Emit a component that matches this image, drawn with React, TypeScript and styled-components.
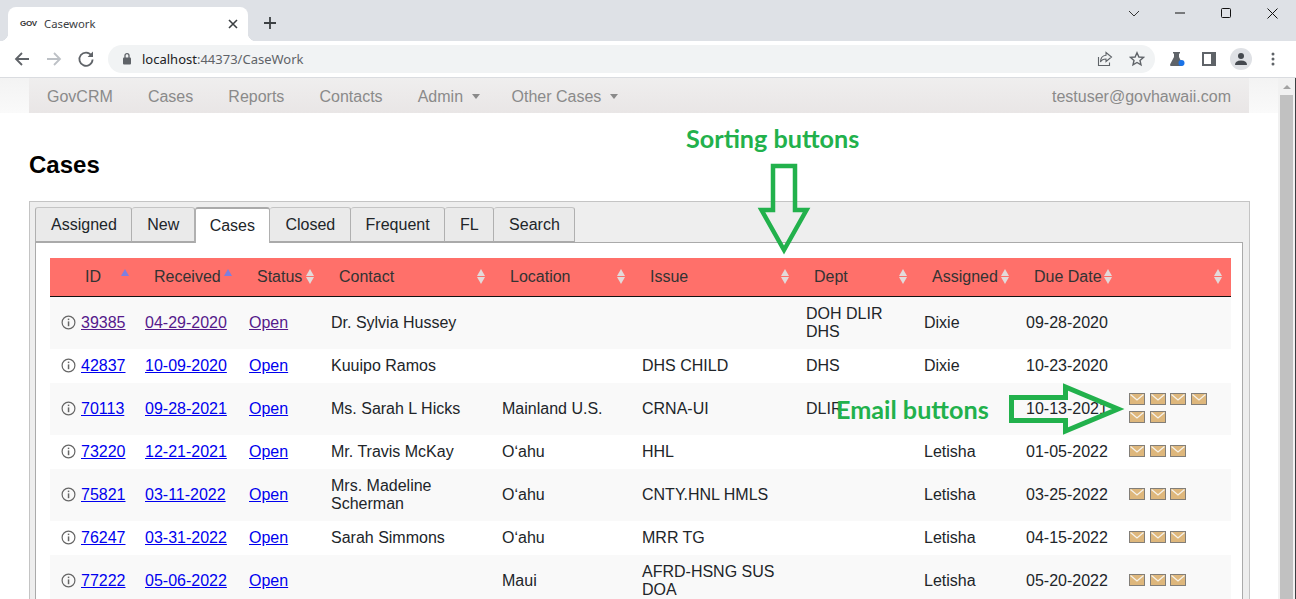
import styled, { createGlobalStyle } from "styled-components";

const GlobalStyle = createGlobalStyle`
  html, body {
    margin: 0;
    padding: 0;
    height: 599px;
    overflow: hidden;
    background: #fff;
    font-family: "Liberation Sans", Arial, sans-serif;
    font-size: 16px;
    color: #212529;
  }
`;

const Screen = styled.div`
  position: relative;
  width: 1296px;
  height: 599px;
  overflow: hidden;
`;

// Browser chrome

const TabStrip = styled.div`
  height: 41px;
  box-sizing: border-box;
  padding: 7px 0 0 8px;
  background: #dee1e6;
  display: flex;
  align-items: flex-start;
`;
const BrowserTab = styled.div`
  position: relative;
  width: 240px;
  height: 34px;
  box-sizing: border-box;
  padding: 0 10px 1px 12px;
  border-radius: 8px 8px 0 0;
  background: #fff;
  display: flex;
  align-items: center;
  font-family: "Noto Sans", sans-serif;
  font-size: 11.3px;
  color: #3c4043;
  &::before,
  &::after {
    content: "";
    position: absolute;
    bottom: 0;
    width: 8px;
    height: 8px;
  }
  &::before {
    left: -8px;
    background: radial-gradient(circle at 0 0, transparent 8px, #fff 8.5px);
  }
  &::after {
    right: -8px;
    background: radial-gradient(circle at 100% 0, transparent 8px, #fff 8.5px);
  }
`;
const Favicon = styled.span`
  width: 24px;
  font-family: "Liberation Sans", sans-serif;
  font-size: 8px;
  letter-spacing: -0.3px;
  font-weight: 700;
  color: #333;
`;
const TabTitle = styled.span`
  flex: 1;
`;
const NewTab = styled.div`
  width: 16px;
  height: 16px;
  margin: 9px 0 0 15px;
`;
const WindowButtons = styled.div`
  margin-left: auto;
  margin-top: -1px;
  display: flex;
  align-items: center;
  height: 14px;
  padding-right: 18px;
  gap: 36px;
`;
const Toolbar = styled.div`
  height: 37px;
  box-sizing: border-box;
  padding: 0 0 1px 13px;
  background: #fff;
  border-bottom: 1px solid #dadce0;
  display: flex;
  align-items: center;
`;
const ToolIcon = styled.div<{ $gap?: number }>`
  width: 18px;
  height: 18px;
  margin-right: ${({ $gap }) => ($gap !== undefined ? $gap : 14)}px;
  display: flex;
`;
const Omnibox = styled.div`
  width: 1047px;
  height: 28px;
  box-sizing: border-box;
  margin: 0 13px 0 -1px;
  padding: 0 10px 0 13px;
  border-radius: 14px;
  background: #f1f3f4;
  display: flex;
  align-items: center;
  font-family: "Noto Sans", sans-serif;
  font-size: 13px;
  color: #5f6368;
`;
const Url = styled.span`
  margin-left: 9px;
  flex: 1;
  b {
    font-weight: 400;
    color: #202124;
  }
`;
const Avatar = styled.div`
  width: 22px;
  height: 22px;
  border-radius: 50%;
  background: #dfe1e5;
  margin-right: 19px;
  display: flex;
  align-items: center;
  justify-content: center;
`;

// Page

const Viewport = styled.div`
  display: flex;
  height: 521px;
`;
const Page = styled.div`
  width: 1278px;
  flex-shrink: 0;
`;
const Scrollbar = styled.div`
  width: 18px;
  box-sizing: border-box;
  padding: 7px 2px 0 2px;
  background: #f1f1f1;
  border-right: 1px solid #3c4043;
  display: flex;
  flex-direction: column;
  align-items: center;
`;
const ScrollArrow = styled.div`
  width: 0;
  height: 0;
  border-left: 4px solid transparent;
  border-right: 4px solid transparent;
  border-bottom: 4px solid #a3a3a3;
`;
const ScrollThumb = styled.div`
  width: 100%;
  flex: 1;
  margin-top: 6px;
  background: #c1c1c1;
`;
const NavWrap = styled.div`
  padding: 0 29px;
  background: linear-gradient(#f3f3f3, #fafafa);
`;
const NavBar = styled.nav`
  height: 35px;
  padding: 2px 18px 0 18px;
  box-sizing: border-box;
  background: linear-gradient(#efeeee, #e9e6e6);
  display: flex;
  align-items: center;
  color: #8a8a8a;
`;
const NavItem = styled.span<{ $menu?: boolean }>`
  margin-right: ${({ $menu }) => ($menu ? 31.5 : 35.1)}px;
  display: flex;
  align-items: center;
`;
const Caret = styled.span`
  margin-left: 9px;
  width: 0;
  height: 0;
  border-left: 4px solid transparent;
  border-right: 4px solid transparent;
  border-top: 5px solid #8a8a8a;
`;
const NavUser = styled.span`
  margin-left: auto;
`;
const Title = styled.h1`
  margin: 38px 0 23px 29px;
  font-size: 24px;
  line-height: 27px;
  font-weight: 700;
  color: #000;
`;
const Card = styled.div`
  width: 1221px;
  box-sizing: border-box;
  margin-left: 29px;
  padding: 5px 6px 0 5px;
  height: 400px;
  border: 1px solid #c4c4c4;
  border-bottom: 0;
  background: #eeeeee;
`;
const TabRow = styled.div`
  display: flex;
  position: relative;
  z-index: 1;
`;
const Tab = styled.div<{ $active?: boolean }>`
  height: ${({ $active }) => ($active ? 36 : 35)}px;
  box-sizing: border-box;
  padding: 0 14.4px 0 ${({ $active }) => ($active ? 14 : 15)}px;
  border: 1px solid #b0b0b0;
  border-left-width: ${({ $active }) => ($active ? 1 : 0)}px;
  border-bottom: ${({ $active }) => ($active ? "0" : "1px solid #aaa")};
  border-top: ${({ $active }) => ($active ? "2px solid #aaa" : "1px solid #c4c4c4")};
  border-radius: 3px 3px 0 0;
  background: ${({ $active }) => ($active ? "#fff" : "#eaeaea")};
  display: flex;
  align-items: center;
  &:first-child {
    border-left-width: 1px;
  }
`;
const Panel = styled.div`
  margin-top: -1px;
  height: 400px;
  box-sizing: border-box;
  padding: 15px 11px 0 14px;
  background: #fff;
  border: 1px solid #aaa;
`;
const Table = styled.table`
  width: 1181px;
  table-layout: fixed;
  border-collapse: separate;
  border-spacing: 0;
`;
const HeadRow = styled.tr`
  height: 39px;
  background: #ff706a;
`;
const Th = styled.th<{ $indent?: number }>`
  position: relative;
  padding: 0 0 0 ${({ $indent }) => ($indent !== undefined ? $indent : 16)}px;
  border-bottom: 1px solid #111;
  text-align: left;
  font-weight: 400;
  color: #333;
`;
const SortArrows = styled.span<{ $up?: boolean; $right?: number }>`
  position: absolute;
  right: ${({ $right }) => ($right !== undefined ? $right : 9)}px;
  top: 11px;
  width: 8px;
  height: 15px;
  &::before,
  &::after {
    content: "";
    position: absolute;
    left: 0;
    border-left: 4px solid transparent;
    border-right: 4px solid transparent;
  }
  &::before {
    top: 0;
    border-bottom: 7px solid ${({ $up }) => ($up ? "#7d7fe0" : "#e3dada")};
  }
  &::after {
    bottom: 0;
    border-top: 7px solid ${({ $up }) => ($up ? "transparent" : "#e3dada")};
  }
`;
const Row = styled.tr<{ $odd?: boolean; $tall?: boolean }>`
  height: ${({ $tall }) => ($tall ? 52 : 34)}px;
  background: ${({ $odd }) => ($odd ? "#f9f9f9" : "#fff")};
`;
const Td = styled.td`
  padding: 0 8px;
  line-height: 18px;
  vertical-align: middle;
`;
const IdCell = styled.div`
  display: flex;
  align-items: center;
  padding-left: 3px;
  gap: 5px;
`;
const InfoSvg = styled.svg`
  flex-shrink: 0;
  margin-top: -1px;
`;
const CaseLink = styled.a<{ $visited?: boolean }>`
  color: ${({ $visited }) => ($visited ? "#551a8b" : "#0000ee")};
  text-decoration: underline;
`;
const Mails = styled.div`
  display: flex;
  flex-wrap: wrap;
  gap: 6px 4.5px;
  width: 84px;
  margin-top: -2px;
`;
const MailSvg = styled.svg`
  display: block;
  width: 16px;
  height: 12px;
`;

// Annotations drawn over the page

const Annotation = styled.div<{ $x: number; $y: number }>`
  position: absolute;
  left: ${({ $x }) => $x}px;
  top: ${({ $y }) => $y}px;
  font-family: Lato, "Open Sans", sans-serif;
  font-size: 25.2px;
  line-height: 28px;
  font-weight: 700;
  color: #22b14c;
  white-space: nowrap;
`;
const Overlay = styled.svg`
  position: absolute;
  left: 0;
  top: 0;
  width: 1296px;
  height: 599px;
  pointer-events: none;
`;

const Mail = () => (
  <MailSvg viewBox="0 0 16 12">
    <rect x="0.5" y="0.5" width="15" height="11" fill="#deb77c" stroke="#827e78" />
    <path d="M1.5 1.5 L8 7 L14.5 1.5" fill="none" stroke="#f6f2ea" strokeWidth="1.3" />
  </MailSvg>
);

const InfoIcon = () => (
  <InfoSvg width="15" height="15" viewBox="0 0 15 15">
    <circle cx="7.5" cy="7.5" r="6.4" fill="none" stroke="#666" strokeWidth="1.2" />
    <rect x="6.8" y="6.4" width="1.5" height="4.8" fill="#666" />
    <rect x="6.8" y="3.6" width="1.5" height="1.5" fill="#666" />
  </InfoSvg>
);

const columns: { label: string; width: number; indent?: number; up?: boolean; right?: number }[] = [
  { label: "ID", width: 87, indent: 35, up: true, right: 8 },
  { label: "Received", width: 104, indent: 17, up: true },
  { label: "Status", width: 82 },
  { label: "Contact", width: 171 },
  { label: "Location", width: 140 },
  { label: "Issue", width: 164 },
  { label: "Dept", width: 118 },
  { label: "Assigned", width: 102 },
  { label: "Due Date", width: 103 },
  { label: "", width: 110 },
];

const rows = [
  { id: "39385", visited: true, date: "04-29-2020", dateVisited: true, status: true, contact: "Dr. Sylvia Hussey", location: "", issue: "", dept: "DOH DLIR DHS", assigned: "Dixie", due: "09-28-2020", mails: 0, tall: true },
  { id: "42837", visited: false, date: "10-09-2020", dateVisited: false, status: false, contact: "Kuuipo Ramos", location: "", issue: "DHS CHILD", dept: "DHS", assigned: "Dixie", due: "10-23-2020", mails: 0, tall: false },
  { id: "70113", visited: false, date: "09-28-2021", dateVisited: false, status: false, contact: "Ms. Sarah L Hicks", location: "Mainland U.S.", issue: "CRNA-UI", dept: "DLIR", assigned: "", due: "10-13-2021", mails: 6, tall: true },
  { id: "73220", visited: false, date: "12-21-2021", dateVisited: false, status: false, contact: "Mr. Travis McKay", location: "Oʻahu", issue: "HHL", dept: "", assigned: "Letisha", due: "01-05-2022", mails: 3, tall: false },
  { id: "75821", visited: false, date: "03-11-2022", dateVisited: false, status: false, contact: "Mrs. Madeline Scherman", location: "Oʻahu", issue: "CNTY.HNL HMLS", dept: "", assigned: "Letisha", due: "03-25-2022", mails: 3, tall: true },
  { id: "76247", visited: false, date: "03-31-2022", dateVisited: false, status: false, contact: "Sarah Simmons", location: "Oʻahu", issue: "MRR TG", dept: "", assigned: "Letisha", due: "04-15-2022", mails: 3, tall: false },
  { id: "77222", visited: false, date: "05-06-2022", dateVisited: false, status: false, contact: "", location: "Maui", issue: "AFRD-HSNG SUS DOA", dept: "", assigned: "Letisha", due: "05-20-2022", mails: 3, tall: true },
];

const tabs = ["Assigned", "New", "Cases", "Closed", "Frequent", "FL", "Search"];

const App = () => {
  return (
    <Screen>
      <GlobalStyle />
      <TabStrip>
        <BrowserTab>
          <Favicon>GOV</Favicon>
          <TabTitle>Casework</TabTitle>
          <svg width="10" height="10" viewBox="0 0 10 10">
            <path d="M1 1 L9 9 M9 1 L1 9" stroke="#3c4043" strokeWidth="1.6" />
          </svg>
        </BrowserTab>
        <NewTab>
          <svg width="14" height="14" viewBox="0 0 14 14">
            <path d="M7 1 V13 M1 7 H13" stroke="#3c4043" strokeWidth="1.8" />
          </svg>
        </NewTab>
        <WindowButtons>
          <svg width="12" height="7" viewBox="0 0 12 7">
            <path d="M1 1 L6 6 L11 1" fill="none" stroke="#333" strokeWidth="1" />
          </svg>
          <svg width="10" height="2" viewBox="0 0 10 2" style={{ marginLeft: -1 }}>
            <path d="M0 1 H10" stroke="#111" strokeWidth="1" />
          </svg>
          <svg width="10" height="10" viewBox="0 0 10 10">
            <rect x="0.5" y="0.5" width="9" height="9" rx="1" fill="none" stroke="#111" />
          </svg>
          <svg width="11" height="11" viewBox="0 0 11 11">
            <path d="M0.5 0.5 L10.5 10.5 M10.5 0.5 L0.5 10.5" stroke="#111" strokeWidth="1" />
          </svg>
        </WindowButtons>
      </TabStrip>
      <Toolbar>
        <ToolIcon>
          <svg width="18" height="18" viewBox="0 0 18 18">
            <path d="M16 9 H3 M9 3 L3 9 L9 15" fill="none" stroke="#5f6368" strokeWidth="1.8" />
          </svg>
        </ToolIcon>
        <ToolIcon>
          <svg width="18" height="18" viewBox="0 0 18 18">
            <path d="M2 9 H15 M9 3 L15 9 L9 15" fill="none" stroke="#bdc1c6" strokeWidth="1.8" />
          </svg>
        </ToolIcon>
        <ToolIcon>
          <svg width="18" height="18" viewBox="0 0 18 18">
            <path d="M14.5 5.5 A6.6 6.6 0 1 0 15.6 9.5" fill="none" stroke="#5f6368" strokeWidth="1.8" />
            <path d="M10.6 7 H16 V1.6 Z" fill="#5f6368" />
          </svg>
        </ToolIcon>
        <Omnibox>
          <svg width="12" height="13" viewBox="0 0 12 13">
            <rect x="2" y="5.5" width="8" height="7" rx="1" fill="#5f6368" />
            <path d="M4 6 V3.6 a2 2 0 0 1 4 0 V6" fill="none" stroke="#5f6368" strokeWidth="1.3" />
          </svg>
          <Url>
            <b>localhost</b>:44373/CaseWork
          </Url>
          <svg width="16" height="16" viewBox="0 0 16 16" style={{ marginRight: 16 }}>
            <path d="M9 1.5 L14.5 6 L9 10.5 V8 C6 8 4.5 9 3.5 11 C3.5 7 6 4.5 9 4.2 Z" fill="none" stroke="#5f6368" strokeWidth="1.1" />
            <path d="M1.5 6 V14.5 H12.5 V11.5" fill="none" stroke="#5f6368" strokeWidth="1.1" />
          </svg>
          <svg width="16" height="16" viewBox="0 0 16 16">
            <path d="M8 1.8 L9.9 6 L14.4 6.4 L11 9.4 L12 13.9 L8 11.5 L4 13.9 L5 9.4 L1.6 6.4 L6.1 6 Z" fill="none" stroke="#5f6368" strokeWidth="1.4" />
          </svg>
        </Omnibox>
        <ToolIcon>
          <svg width="18" height="18" viewBox="0 0 18 18">
            <path d="M5 2 H12 V3.5 H11 V7 L14.5 14 Q15.2 16 13 16 H3.5 Q1.5 16 2.3 14 L6 7 V3.5 H5 Z" fill="#5f6368" />
            <circle cx="13.5" cy="13" r="3" fill="#1a73e8" />
          </svg>
        </ToolIcon>
        <ToolIcon $gap={12}>
          <svg width="18" height="18" viewBox="0 0 18 18">
            <rect x="2" y="2" width="14" height="14" fill="#5f6368" />
            <rect x="4" y="4" width="7" height="10" fill="#fff" />
          </svg>
        </ToolIcon>
        <Avatar>
          <svg width="14" height="14" viewBox="0 0 14 14">
            <circle cx="7" cy="4" r="3" fill="#45494f" />
            <path d="M1 13 Q1 8.5 7 8.5 Q13 8.5 13 13 Z" fill="#45494f" />
          </svg>
        </Avatar>
        <svg width="4" height="14" viewBox="0 0 4 14">
          <circle cx="2" cy="2" r="1.5" fill="#5f6368" />
          <circle cx="2" cy="7" r="1.5" fill="#5f6368" />
          <circle cx="2" cy="12" r="1.5" fill="#5f6368" />
        </svg>
      </Toolbar>
      <Viewport>
        <Page>
          <NavWrap>
            <NavBar>
              <NavItem>GovCRM</NavItem>
              <NavItem>Cases</NavItem>
              <NavItem>Reports</NavItem>
              <NavItem>Contacts</NavItem>
              <NavItem $menu>
                Admin
                <Caret />
              </NavItem>
              <NavItem $menu>
                Other Cases
                <Caret />
              </NavItem>
              <NavUser>testuser@govhawaii.com</NavUser>
            </NavBar>
          </NavWrap>
          <Title>Cases</Title>
          <Card>
            <TabRow>
              {tabs.map((t) => (
                <Tab key={t} $active={t === "Cases"}>
                  {t}
                </Tab>
              ))}
            </TabRow>
            <Panel>
              <Table>
                <colgroup>
                  {columns.map((c) => (
                    <col key={c.label} style={{ width: c.width }} />
                  ))}
                </colgroup>
                <thead>
                  <HeadRow>
                    {columns.map((c) => (
                      <Th key={c.label} $indent={c.indent}>
                        {c.label}
                        <SortArrows $up={c.up} $right={c.right} />
                      </Th>
                    ))}
                  </HeadRow>
                </thead>
                <tbody>
                  {rows.map((r, i) => (
                    <Row key={r.id} $odd={i % 2 === 0} $tall={r.tall}>
                      <Td>
                        <IdCell>
                          <InfoIcon />
                          <CaseLink $visited={r.visited}>{r.id}</CaseLink>
                        </IdCell>
                      </Td>
                      <Td>
                        <CaseLink $visited={r.dateVisited}>{r.date}</CaseLink>
                      </Td>
                      <Td>
                        <CaseLink $visited={r.status}>Open</CaseLink>
                      </Td>
                      <Td>{r.contact}</Td>
                      <Td>{r.location}</Td>
                      <Td>{r.issue}</Td>
                      <Td>{r.dept}</Td>
                      <Td>{r.assigned}</Td>
                      <Td>{r.due}</Td>
                      <Td>
                        <Mails>
                          {Array.from({ length: r.mails }).map((_, m) => (
                            <Mail key={m} />
                          ))}
                        </Mails>
                      </Td>
                    </Row>
                  ))}
                </tbody>
              </Table>
            </Panel>
          </Card>
        </Page>
        <Scrollbar>
          <ScrollArrow />
          <ScrollThumb />
        </Scrollbar>
      </Viewport>
      <Annotation $x={686} $y={124}>
        Sorting buttons
      </Annotation>
      <Annotation $x={836} $y={395}>
        Email buttons
      </Annotation>
      <Overlay viewBox="0 0 1296 599">
        <path d="M773 166 H795 V210 H806.5 L784 250 L761.5 210 H773 Z" fill="none" stroke="#22b14c" strokeWidth="4.5" />
        <path d="M1011.5 397.5 H1065.5 V387 L1118 409 L1065.5 431 V420.5 H1011.5 Z" fill="none" stroke="#22b14c" strokeWidth="5" />
      </Overlay>
    </Screen>
  );
};

export default App;
